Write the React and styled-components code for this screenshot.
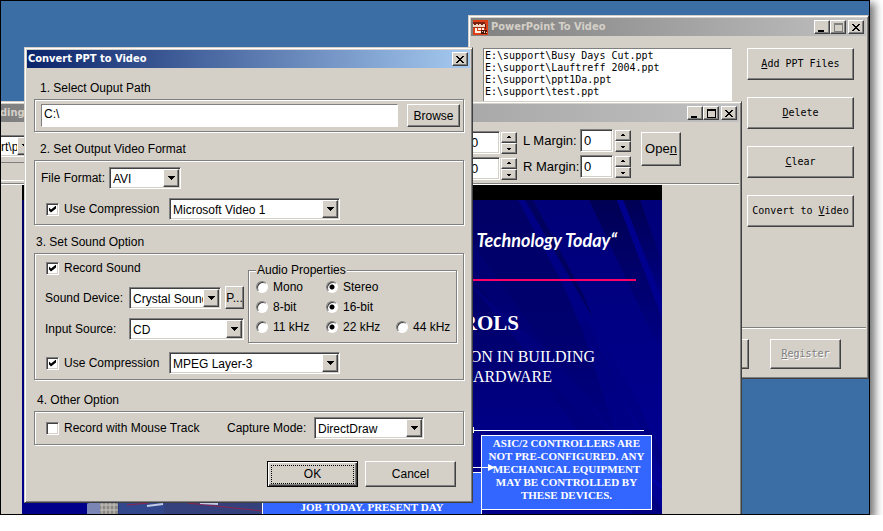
import React, { useState } from 'react'
import styled, { createGlobalStyle, css } from 'styled-components'

const FACE = '#d4d0c8'
const SHADOW = '#808080'
const DARK = '#404040'
const DESKTOP = '#3a6ea5'

const UI_FONT = "'Liberation Sans', Arial, sans-serif"
const MONO_FONT = "'DejaVu Sans Mono', 'Liberation Mono', monospace"
const CAPTION_FONT = "'DejaVu Sans Condensed', 'DejaVu Sans', Tahoma, sans-serif"
const SERIF_FONT = "'Liberation Serif', 'Times New Roman', serif"

const GlobalStyle = createGlobalStyle`
  * {
    box-sizing: border-box;
  }

  body {
    margin: 0;
    background: #fff;
    overflow: hidden;
    color: #000;
    font: 12px/16px ${UI_FONT};
  }

  button, input, select {
    margin: 0;
    font: inherit;
    color: inherit;
  }
`

const raised = css`
  border: 1px solid;
  border-color: #fff ${DARK} ${DARK} #fff;
  box-shadow: inset -1px -1px ${SHADOW};
  background: ${FACE};
`

const sunken = css`
  border: 1px solid;
  border-color: ${SHADOW} #fff #fff ${SHADOW};
  box-shadow: inset 1px 1px ${DARK}, inset -1px -1px ${FACE};
  background: #fff;
`

const etched = css`
  border: 1px solid ${SHADOW};
  box-shadow: 1px 1px #fff, inset 1px 1px #fff;
`

const Desktop = styled.main`
  position: relative;
  width: calc(100vw - 13px);
  height: calc(100vh - 16px);
  overflow: hidden;
  border: 1px solid #000;
  background: ${DESKTOP};
`

const DesktopShadow = styled.div`
  width: calc(100vw - 13px);
  box-shadow: 4px 4px 8px 1px #777;
`

const Window = styled.section`
  position: absolute;
  left: ${({ $x }) => $x}px;
  top: ${({ $y }) => $y}px;
  width: ${({ $width }) => $width}px;
  padding: 2px;
  border: 1px solid;
  border-color: ${FACE} ${DARK} ${DARK} ${FACE};
  box-shadow: inset 1px 1px #fff, inset -1px -1px ${SHADOW};
  background: ${FACE};
`

/* Title bar */

const TitleBar = styled.header`
  display: flex;
  align-items: center;
  height: 18px;
  padding: 0 2px 0 ${({ $icon }) => ($icon ? 2 : 1)}px;
  color: ${({ $active }) => ($active ? '#fff' : FACE)};
  background: ${({ $active }) =>
    $active
      ? 'linear-gradient(90deg, #0a246a, #a6caf0)'
      : 'linear-gradient(90deg, #808080, #c0c0c0)'};
`

const Caption = styled.h1`
  flex: 1;
  margin: 0;
  padding-left: ${({ $icon }) => ($icon ? 3 : 0)}px;
  font: bold 11px/18px ${CAPTION_FONT};
  white-space: nowrap;
`

const CaptionButton = styled.button`
  ${raised}
  display: flex;
  align-items: center;
  justify-content: center;
  width: 16px;
  height: 14px;
  padding: 0;
  color: ${({ disabled }) => (disabled ? SHADOW : '#000')};

  &:last-child {
    margin-left: 2px;
  }
`

/* Buttons and fields */

const Button = styled.button`
  ${raised}
  width: ${({ $width }) => $width}px;
  height: ${({ $height }) => $height || 23}px;
  padding: 0;
  white-space: nowrap;
`

const DefaultButton = styled(Button)`
  border-color: #000;
  box-shadow: inset 1px 1px #fff, inset -1px -1px ${DARK},
    inset -2px -2px ${SHADOW};

  span {
    display: block;
    margin: 0 3px;
    border: 1px dotted #000;
    line-height: 17px;
  }
`

const MonoButton = styled(Button)`
  font-family: ${MONO_FONT};
  font-size: 10px;

  &:disabled {
    color: ${SHADOW};
    text-shadow: 1px 1px #fff;
  }
`

const PathInput = styled.input`
  flex: 1;
  min-width: 0;
  height: 23px;
  padding: 0 2px 4px;
  border: 1px solid;
  border-color: ${SHADOW} #fff #fff ${SHADOW};
  background: #fff;
  outline: 0;
`

const SelectBox = styled.div`
  ${sunken}
  display: grid;
  flex: ${({ $width }) => ($width ? 'none' : 1)};
  width: ${({ $width }) => ($width ? `${$width}px` : 'auto')};
  height: 22px;
  padding: 1px;
  min-width: 0;

  select {
    grid-area: 1 / 1;
    width: 100%;
    height: 18px;
    min-width: 0;
    padding: 2px 16px 0 2px;
    border: 0;
    outline: 0;
    appearance: none;
    background: transparent;
  }
`

const SelectArrow = styled.span`
  ${raised}
  grid-area: 1 / 1;
  justify-self: end;
  display: flex;
  align-items: center;
  justify-content: center;
  width: 16px;
  height: 18px;
  pointer-events: none;
`

const CheckRow = styled.label`
  display: flex;
  align-items: center;
  gap: 5px;
  width: ${({ $width }) => ($width ? `${$width}px` : 'auto')};
  white-space: nowrap;

  input {
    ${sunken}
    position: relative;
    width: 13px;
    height: 13px;
    appearance: none;
  }

  input:checked::after {
    content: '';
    display: block;
    width: 7px;
    height: 7px;
    margin: 2px;
    background: #000;
    clip-path: polygon(0 29%, 29% 57%, 100% 0, 100% 43%, 29% 100%, 0 71%);
  }
`

const RadioRow = styled.label`
  display: flex;
  align-items: center;
  gap: 5px;
  white-space: nowrap;

  input {
    width: 12px;
    height: 12px;
    border: 1px solid;
    border-color: ${SHADOW} #fff #fff ${SHADOW};
    border-radius: 50%;
    box-shadow: inset 1px 1px ${DARK};
    appearance: none;
    background: #fff;
  }

  input:checked {
    background: radial-gradient(circle, #000 2px, #fff 3px);
  }
`

const Row = styled.div`
  display: flex;
  align-items: center;
  gap: ${({ $gap }) => $gap || 0}px;
  padding-left: ${({ $indent }) => $indent || 0}px;
`

const FieldLabel = styled.label`
  width: ${({ $width }) => $width}px;
  white-space: nowrap;
`

/* Convert dialog */

const DialogBody = styled.form`
  padding: 3px 5px 13px 7px;
`

const SectionTitle = styled.h2`
  margin: ${({ $space }) => $space || 9}px 0 3px;
  padding-left: ${({ $indent }) => $indent || 6}px;
  font: inherit;
`

const Group = styled.div`
  ${etched}
  display: flex;
  flex-direction: column;
  gap: 9px;
  margin-right: 1px;
  padding: ${({ $pad }) => $pad || '5px 4px'};
`

const SoundTop = styled.div`
  display: flex;
  gap: 4px;
`

const SoundRows = styled.div`
  display: flex;
  flex-direction: column;
  width: 199px;
  gap: 9px;

  ${CheckRow} {
    height: 18px;
    padding-left: 1px;
  }
`

const AudioBox = styled.fieldset`
  ${etched}
  display: grid;
  grid-template-columns: 70px 70px auto;
  grid-auto-rows: 20px;
  flex: 1;
  min-width: 0;
  margin: 4px 2px 0 0;
  padding: 0 0 5px 7px;

  legend {
    padding: 0 1px;
    line-height: 14px;
    background: ${FACE};
  }
`

const DialogButtons = styled.div`
  display: flex;
  justify-content: flex-end;
  gap: 7px;
  padding: 16px 9px 0 0;
`

/* File list window */

const ListBody = styled.div`
  display: flex;
  gap: 15px;
  min-height: 291px;
  padding: 12px;
`

const FileList = styled.ul`
  flex: 1;
  margin: 0;
  padding: 1px;
  border: 1px solid;
  border-color: ${SHADOW} #fff #fff ${SHADOW};
  background: #fff;
  list-style: none;
  font: 10px/12px ${MONO_FONT};
`

const ButtonColumn = styled.div`
  display: flex;
  flex-direction: column;
  gap: 17px;
`

const ListFooter = styled.footer`
  display: flex;
  justify-content: flex-end;
  gap: 21px;
  padding: 11px 25px 7px;
  border-top: 1px solid ${SHADOW};
  box-shadow: inset 0 1px #fff;
`

/* Preview window */

const Toolbar = styled.div`
  display: flex;
  height: 63px;
  padding: 7px 58px 0 0;
  border-bottom: 1px solid #fff;
  box-shadow: inset 0 -1px ${SHADOW};
  font-size: 13px;
`

const PathColumn = styled.div`
  width: 60px;
  margin-right: auto;
  padding-top: 6px;
  font-size: 12px;

  select {
    padding-left: 0;
  }
`

const PathFrame = styled.div`
  height: 19px;
  margin-top: 5px;
  border-top: 1px solid ${SHADOW};
  border-bottom: 1px solid #fff;
`

const SpinColumn = styled.div`
  display: flex;
  flex-direction: column;
  gap: 3px;
  margin: ${({ $low }) => ($low ? '2px 6px 0 0' : '0 10px 0 0')};
`

const SpinInput = styled.input`
  ${sunken}
  width: 33px;
  height: 23px;
  padding: 0 3px;
  outline: 0;
`

const SpinButtons = styled.div`
  display: flex;
  flex-direction: column;
  margin-left: ${({ $tight }) => ($tight ? 1 : 2)}px;

  button {
    ${raised}
    display: flex;
    align-items: center;
    justify-content: center;
    width: 16px;
    height: 11px;
    padding: 0;
  }
`

const OpenCell = styled.div`
  padding-top: 3px;
`

const Slide = styled.article`
  position: relative;
  width: 640px;
  margin-left: 23px;
  border-top: 15px solid #000;
  color: #fff;

  svg {
    display: block;
  }
`

const SlideText = styled.p`
  position: absolute;
  right: ${({ $right }) => $right}px;
  top: ${({ $top }) => $top}px;
  margin: 0;
  font-family: ${SERIF_FONT};
  font-size: ${({ $size }) => $size}px;
  font-weight: ${({ $bold }) => ($bold ? 'bold' : 'normal')};
  line-height: 20px;
  white-space: nowrap;
`

const Tagline = styled(SlideText)`
  font-family: Lato, sans-serif;
  font-style: italic;
`

const Callout = styled.div`
  position: absolute;
  left: ${({ $x }) => $x}px;
  top: ${({ $y }) => $y}px;
  width: ${({ $width }) => $width}px;
  padding: ${({ $padTop }) => $padTop}px 4px 7px;
  border: 1px solid #fff;
  background: #3366ff;
  font: bold 11px/13px ${SERIF_FONT};
  text-align: center;
  white-space: nowrap;
`

const CloseIcon = () => (
  <svg width="8" height="7" viewBox="0 0 8 7" shapeRendering="crispEdges">
    <path
      d="M0 0h2v1h1v1h2v-1h1v-1h2v1h-1v1h-1v1h-1v1h1v1h1v1h1v1h-2v-1h-1v-1h-2v1h-1v1h-2v-1h1v-1h1v-1h1v-1h-1v-1h-1v-1h-1z"
      fill="currentColor"
    />
  </svg>
)

const MinimizeIcon = () => (
  <svg width="10" height="9" viewBox="0 0 10 9" shapeRendering="crispEdges">
    <path d="M1 7h6v2H1z" fill="currentColor" />
  </svg>
)

const MaximizeIcon = () => (
  <svg width="9" height="9" viewBox="0 0 9 9" shapeRendering="crispEdges">
    <path
      d="M0 0h9v9H0zM1 2v6h7V2z"
      fill="currentColor"
      fillRule="evenodd"
    />
  </svg>
)

const DownIcon = () => (
  <svg width="7" height="4" viewBox="0 0 7 4" shapeRendering="crispEdges">
    <path d="M0 0h7v1h-1v1h-1v1h-1v1h-1v-1h-1v-1h-1v-1h-1z" />
  </svg>
)

const SpinIcon = ({ up }) => (
  <svg width="4" height="3" viewBox="0 0 4 3" shapeRendering="crispEdges">
    <path d={up ? 'M1 0h2v1h1v1H0V1h1z' : 'M0 1h4v1H3v1H1V2H0z'} />
  </svg>
)

const AppIcon = () => (
  <svg width="15" height="15" viewBox="0 0 15 15" shapeRendering="crispEdges">
    <path d="M0 0h15v15H0z" fill="#dc4014" />
    <path d="M0 2h12v2H0z" fill="#7a2414" />
    <path d="M0 4h12v3H0z" fill="#f6d8c0" />
    <path d="M1 4h2v1H1zM5 4h1v1H5zM8 4h2v1H8zM12 4h1v5h-1z" fill="#6a1c10" />
    <path d="M0 7h4v1H0zM4 7h8v1H4z" fill="#a03018" />
    <path d="M2 8h2v5H2zM4 11h5v2H4zM9 8h2v3H9zM5 8h3v2H5z" fill="#fff0e4" />
    <path d="M8 10h6v4H8z" fill="#4c1408" />
    <path d="M9 11h1v1H9zM11 11h1v2h-1zM13 12h1v1h-1z" fill="#f0c8a8" />
  </svg>
)

const SlideArt = () => (
  <svg width="640" height="480" viewBox="0 0 640 480">
    <defs>
      <linearGradient id="sky" x1="0" y1="0" x2="0" y2="1">
        <stop offset="0" stopColor="#000066" />
        <stop offset="0.3" stopColor="#000070" />
        <stop offset="0.5" stopColor="#00008a" />
        <stop offset="1" stopColor="#00008c" />
      </linearGradient>
      <linearGradient id="beam" x1="0" y1="0" x2="0" y2="1">
        <stop offset="0" stopColor="#000054" />
        <stop offset="1" stopColor="#000084" />
      </linearGradient>
      <linearGradient id="glow" x1="0" y1="0" x2="0" y2="1">
        <stop offset="0" stopColor="#000078" />
        <stop offset="1" stopColor="#000096" />
      </linearGradient>
    </defs>
    <path d="M0 0h640v480H0z" fill="url(#sky)" />
    <path d="M505 0h135v314h-20L560 130z" fill="url(#glow)" />
    <path d="M567 0h28l34 84 11 32v34l-10-16z" fill="url(#beam)" />
    <path d="M601 0h17l22 62v36z" fill="url(#beam)" />
    <path d="M595 0h6l39 100v18z" fill="#00008e" />
    <path d="M503 0h8l50 94 10 24z" fill="#00005e" />
    <path d="M496 0h7l110 196 27 60v14z" fill="#000084" />
    <path d="M448 40l200 280h-34L448 70z" fill="#000078" opacity="0.6" />
    <path d="M448 84l80 70 90 110h-20z" fill="#000080" opacity="0.7" />
    <path d="M565 120l55 120h-24l-70-100z" fill="#000070" opacity="0.25" />
    <path d="M614 266l26 20v3z" fill="#0000b0" />
    <path d="M440 80h174" stroke="#ff0066" strokeWidth="2" />
    <path
      d="M440 230.500h182M451.500 227v6M440 267.500h30"
      stroke="#fff"
      fill="none"
    />
    {/* campus photo */}
    <path d="M65 300h176v16H65z" fill="#2b3a78" />
    <path d="M65 304l6-3 4 2 5-3v16H65z" fill="#7b86b4" />
    <path d="M78 300h18v16H78z" fill="#8c8a88" />
    <path
      d="M80 300v16M84 300v16M88 300v16M92 300v16M78 305h18M78 310h18"
      stroke="#c9c5bc"
    />
    <path d="M97 300h45v16H97z" fill="#33478c" />
    <path d="M142 300h99v16h-99z" fill="#34417c" />
    <path d="M165 303l76 8M105 305l22-2" stroke="#8c2450" />
    <path d="M125 306l16-2M178 303l18 1" stroke="#c4cbe4" strokeWidth="2" />
  </svg>
)

const ArrowHead = styled.svg`
  position: absolute;
  left: 459px;
  top: 264px;
`

const Select = ({ id, width, value, label }) => (
  <SelectBox $width={width}>
    <select id={id} defaultValue={value} aria-label={label}>
      <option>{value}</option>
    </select>
    <SelectArrow>
      <DownIcon />
    </SelectArrow>
  </SelectBox>
)

const SpinField = ({ label, tight }) => {
  const [value, setValue] = useState(0)
  return (
    <Row>
      <SpinInput
        id={label}
        aria-label={label}
        value={value}
        onChange={e => setValue(Number(e.target.value) || 0)}
      />
      <SpinButtons $tight={tight}>
        <button aria-label={`${label} up`} onClick={() => setValue(value + 1)}>
          <SpinIcon up />
        </button>
        <button
          aria-label={`${label} down`}
          onClick={() => setValue(value - 1)}
        >
          <SpinIcon />
        </button>
      </SpinButtons>
    </Row>
  )
}

const Radio = ({ name, children, checked }) => (
  <RadioRow>
    <input type="radio" name={name} defaultChecked={checked} />
    {children}
  </RadioRow>
)

const files = [
  'E:\\support\\Busy Days Cut.ppt',
  'E:\\support\\Lauftreff 2004.ppt',
  'E:\\support\\ppt1Da.ppt',
  'E:\\support\\test.ppt',
]

const FileListWindow = () => (
  <Window $x={467} $y={14} $width={401}>
    <TitleBar $icon>
      <AppIcon />
      <Caption $icon>PowerPoint To Video</Caption>
      <CaptionButton aria-label="Minimize">
        <MinimizeIcon />
      </CaptionButton>
      <CaptionButton aria-label="Maximize" disabled>
        <MaximizeIcon />
      </CaptionButton>
      <CaptionButton aria-label="Close">
        <CloseIcon />
      </CaptionButton>
    </TitleBar>
    <ListBody>
      <FileList>
        {files.map(file => (
          <li key={file}>{file}</li>
        ))}
      </FileList>
      <ButtonColumn>
        <MonoButton $width={107} $height={32}>
          <u>A</u>dd PPT Files
        </MonoButton>
        <MonoButton $width={107} $height={32}>
          <u>D</u>elete
        </MonoButton>
        <MonoButton $width={107} $height={32}>
          <u>C</u>lear
        </MonoButton>
        <MonoButton $width={107} $height={32}>
          Convert to <u>V</u>ideo
        </MonoButton>
      </ButtonColumn>
    </ListBody>
    <ListFooter>
      <MonoButton $width={71} $height={30} aria-label="Help" />
      <MonoButton $width={71} $height={30} disabled>
        <u>R</u>egister
      </MonoButton>
    </ListFooter>
  </Window>
)

const PreviewWindow = () => (
  <Window $x={-5} $y={100} $width={746}>
    <TitleBar>
      <Caption>ding</Caption>
      <CaptionButton aria-label="Minimize">
        <MinimizeIcon />
      </CaptionButton>
      <CaptionButton aria-label="Maximize">
        <MaximizeIcon />
      </CaptionButton>
      <CaptionButton aria-label="Close">
        <CloseIcon />
      </CaptionButton>
    </TitleBar>
    <Toolbar>
      <PathColumn>
        <Select label="File" width={36} value="rt\p" />
        <PathFrame />
      </PathColumn>
      <SpinColumn $low>
        <SpinField label="Top" tight />
        <SpinField label="Bottom" tight />
      </SpinColumn>
      <SpinColumn>
        <Row>
          <FieldLabel $width={57} htmlFor="L Margin">
            L Margin:
          </FieldLabel>
          <SpinField label="L Margin" />
        </Row>
        <Row>
          <FieldLabel $width={57} htmlFor="R Margin">
            R Margin:
          </FieldLabel>
          <SpinField label="R Margin" />
        </Row>
      </SpinColumn>
      <OpenCell>
        <Button $width={40} $height={34}>
          Ope<u>n</u>
        </Button>
      </OpenCell>
    </Toolbar>
    <Slide>
      <SlideArt />
      <Tagline $right={45} $top={30} $size={18} $bold>
        Technology Today“
      </Tagline>
      <SlideText $right={143} $top={113} $size={21} $bold>
        ROLS
      </SlideText>
      <SlideText $right={67} $top={147} $size={16}>
        ON IN BUILDING
      </SlideText>
      <SlideText $right={110} $top={167} $size={16}>
        ARDWARE
      </SlideText>
      <Callout $x={240} $y={272} $width={220} $padTop={28}>
        JOB TODAY. PRESENT DAY
      </Callout>
      <Callout $x={459} $y={235} $width={171} $padTop={1}>
        ASIC/2 CONTROLLERS ARE
        <br />
        NOT PRE-CONFIGURED. ANY
        <br />
        MECHANICAL EQUIPMENT
        <br />
        MAY BE CONTROLLED BY
        <br />
        THESE DEVICES.
      </Callout>
      <ArrowHead width="14" height="8" viewBox="0 0 14 8">
        <path d="M0 3.500h8" stroke="#fff" />
        <path d="M7 0v7l7-3.500z" fill="#fff" />
      </ArrowHead>
    </Slide>
  </Window>
)

const ConvertDialog = () => (
  <Window $x={23} $y={46} $width={449}>
    <TitleBar $active>
      <Caption>Convert PPT to Video</Caption>
      <CaptionButton aria-label="Close">
        <CloseIcon />
      </CaptionButton>
    </TitleBar>
    <DialogBody onSubmit={e => e.preventDefault()}>
      <SectionTitle>1. Select Ouput Path</SectionTitle>
      <Group $pad="4px 3px 4px 6px">
        <Row $gap={9}>
          <PathInput aria-label="Output path" defaultValue="C:\" />
          <Button type="button" $width={53}>
            Browse
          </Button>
        </Row>
      </Group>

      <SectionTitle>2. Set Output Video Format</SectionTitle>
      <Group $pad="6px 4px 4px 6px">
        <Row>
          <FieldLabel $width={68} htmlFor="format">
            File Format:
          </FieldLabel>
          <Select id="format" width={72} value="AVI" />
        </Row>
        <Row $indent={5}>
          <CheckRow $width={123}>
            <input type="checkbox" defaultChecked />
            Use Compression
          </CheckRow>
          <Select label="Video codec" width={171} value="Microsoft Video 1" />
        </Row>
      </Group>

      <SectionTitle $indent={2}>3. Set Sound Option</SectionTitle>
      <Group $pad="5px 4px 5px 10px">
        <SoundTop>
          <SoundRows>
            <CheckRow>
              <input type="checkbox" defaultChecked />
              Record Sound
            </CheckRow>
            <Row>
              <FieldLabel $width={84} htmlFor="device">
                Sound Device:
              </FieldLabel>
              <Select id="device" width={92} value="Crystal Sound" />
              <Row $indent={4}>
                <Button type="button" $width={19}>
                  P...
                </Button>
              </Row>
            </Row>
            <Row>
              <FieldLabel $width={84} htmlFor="source">
                Input Source:
              </FieldLabel>
              <Select id="source" value="CD" />
            </Row>
          </SoundRows>
          <AudioBox>
            <legend>Audio Properties</legend>
            <Radio name="channels">Mono</Radio>
            <Radio name="channels" checked>
              Stereo
            </Radio>
            <span />
            <Radio name="bits">8-bit</Radio>
            <Radio name="bits" checked>
              16-bit
            </Radio>
            <span />
            <Radio name="rate">11 kHz</Radio>
            <Radio name="rate" checked>
              22 kHz
            </Radio>
            <Radio name="rate">44 kHz</Radio>
          </AudioBox>
        </SoundTop>
        <Row $indent={1}>
          <CheckRow $width={123}>
            <input type="checkbox" defaultChecked />
            Use Compression
          </CheckRow>
          <Select label="Audio codec" width={171} value="MPEG Layer-3" />
        </Row>
      </Group>

      <SectionTitle $space={12} $indent={3}>
        4. Other Option
      </SectionTitle>
      <Group $pad="5px 4px 5px 11px">
        <Row>
          <CheckRow $width={181}>
            <input type="checkbox" />
            Record with Mouse Track
          </CheckRow>
          <FieldLabel $width={87} htmlFor="capture">
            Capture Mode:
          </FieldLabel>
          <Select id="capture" width={110} value="DirectDraw" />
        </Row>
      </Group>

      <DialogButtons>
        <DefaultButton $width={91} $height={26}>
          <span>OK</span>
        </DefaultButton>
        <Button type="button" $width={91} $height={26}>
          Cancel
        </Button>
      </DialogButtons>
    </DialogBody>
  </Window>
)

const App = () => (
  <>
    <GlobalStyle />
    <DesktopShadow>
      <Desktop>
        <FileListWindow />
        <PreviewWindow />
        <ConvertDialog />
      </Desktop>
    </DesktopShadow>
  </>
)

export default App
